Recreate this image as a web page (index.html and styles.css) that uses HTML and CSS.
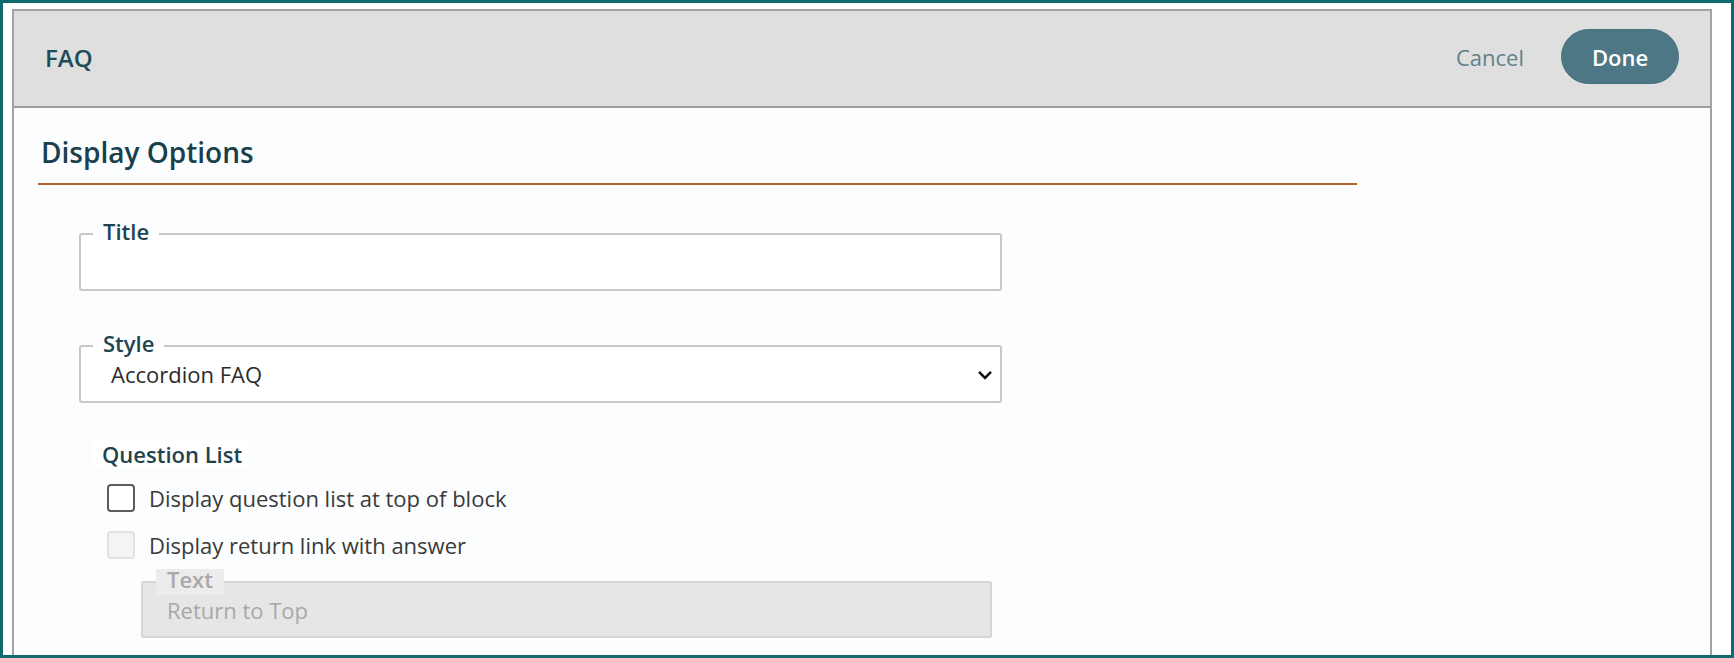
FILE: index.html
```html
<!DOCTYPE html>
<html lang="en">
<head>
<meta charset="utf-8">
<title>FAQ - Display Options</title>
<link rel="stylesheet" href="styles.css">
</head>
<body>
<div class="frame">
  <div class="panel">
    <header class="panel-header">
      <h1 class="panel-title">FAQ</h1>
      <div class="actions">
        <button class="btn-cancel" type="button">Cancel</button>
        <button class="btn-done" type="button">Done</button>
      </div>
    </header>
    <div class="panel-body">
      <section class="options">
        <h2 class="section-title">Display Options</h2>
        <div class="form">
          <fieldset class="field field-title">
            <legend class="field-legend">Title</legend>
            <input class="field-input" type="text" aria-label="Title">
          </fieldset>
          <fieldset class="field field-style">
            <legend class="field-legend">Style</legend>
            <div class="select">
              <span class="select-value">Accordion FAQ</span>
              <svg class="chevron" width="16" height="10" viewBox="0 0 16 10" aria-hidden="true">
                <polyline points="2,1.8 8,7.8 14,1.8" fill="none" stroke="#111" stroke-width="2.6" stroke-linecap="butt" stroke-linejoin="miter"/>
              </svg>
            </div>
          </fieldset>
          <fieldset class="group">
            <legend class="group-legend">Question List</legend>
            <label class="check-row">
              <span class="check-box"></span>
              <span class="check-label">Display question list at top of block</span>
            </label>
            <label class="check-row check-row-2">
              <span class="check-box check-box-disabled"></span>
              <span class="check-label">Display return link with answer</span>
            </label>
            <fieldset class="field field-disabled">
              <legend class="field-legend legend-disabled">Text</legend>
              <div class="field-input input-disabled">Return to Top</div>
            </fieldset>
          </fieldset>
        </div>
      </section>
    </div>
  </div>
</div>
</body>
</html>
```

FILE: styles.css
```css
* {
  box-sizing: border-box;
}

html, body {
  margin: 0;
  padding: 0;
  background: #ffffff;
}

body {
  font-family: "Open Sans", "Noto Sans", "Liberation Sans", sans-serif;
  color: #333333;
}

.frame {
  width: 1734px;
  height: 658px;
  border: 3px solid #0e6a6e;
  padding: 6px 19px 0 9px;
  background: #ffffff;
  overflow: hidden;
}

.panel {
  height: 100%;
  border: 2px solid #a2a2a2;
  border-bottom: none;
  background: #fcfdfe;
}

.panel-header {
  height: 97px;
  background: #dfdfdf;
  border-bottom: 2px solid #9c9c9c;
  display: flex;
  align-items: center;
  justify-content: space-between;
  padding: 0 31px 4px 31px;
}

.panel-title {
  margin: 0;
  font-size: 24px;
  font-weight: 600;
  color: #1e4c5a;
  line-height: 32px;
  padding-top: 2px;
}

.actions {
  display: flex;
  align-items: center;
  gap: 37px;
}

.btn-cancel {
  border: none;
  background: transparent;
  padding: 0;
  font-family: inherit;
  font-size: 22px;
  font-weight: 400;
  color: #62808a;
  line-height: 30px;
}

.btn-done {
  width: 118px;
  height: 55px;
  border: 1px solid #46707e;
  border-radius: 28px;
  background: #4e7785;
  color: #ffffff;
  font-family: inherit;
  font-size: 22px;
  font-weight: 600;
  padding: 0;
  line-height: 30px;
}

.panel-body {
  padding: 0 0 0 24px;
}

.options {
  width: 1319px;
}

.section-title {
  margin: 24px 0 0 0;
  font-size: 28px;
  font-weight: 600;
  line-height: 40px;
  color: #19414d;
  padding: 0 0 11px 3px;
  border-bottom: 2px solid #b4622a;
}

.form {
  margin-left: 41px;
  width: 923px;
  padding-top: 36px;
}

.field {
  margin: 0;
  padding: 0 0 12px 0;
  border: 2px solid #c8c8c8;
  border-radius: 3px;
  background: #ffffff;
  min-width: 0;
}

.field-legend {
  margin-left: 12px;
  padding: 0 10px 6px 10px;
  font-size: 22px;
  font-weight: 600;
  line-height: 20px;
  color: #1f4450;
}

.field-input {
  display: block;
  width: 100%;
  height: 30px;
  border: none;
  background: transparent;
  font-family: inherit;
  font-size: 22px;
  line-height: 30px;
  padding: 0 0 0 30px;
  color: #333333;
  outline: none;
}

.field-style {
  margin-top: 42px;
}

.select {
  display: flex;
  align-items: center;
  justify-content: space-between;
  height: 30px;
  padding: 0 7px 0 30px;
  font-size: 22px;
  line-height: 30px;
  color: #2b2b2b;
}

.chevron {
  display: block;
  margin-top: 1px;
}

.group {
  margin: 36px 0 0 0;
  padding: 0;
  border: none;
  min-width: 0;
}

.group-legend {
  margin-left: 13px;
  padding: 0 8px 0 10px;
  font-size: 22px;
  font-weight: 600;
  line-height: 30px;
  color: #1f4450;
  background: #ffffff;
}

.check-row {
  display: flex;
  align-items: center;
  gap: 14px;
  height: 30px;
  margin: 14px 0 0 28px;
}

.check-row-2 {
  margin-top: 17px;
}

.check-box {
  width: 28px;
  height: 28px;
  border: 2px solid #5c5c5c;
  border-radius: 4px;
  background: #ffffff;
  flex: none;
}

.check-box-disabled {
  border-color: #e2e2e2;
  background: #f4f4f4;
}

.check-label {
  font-size: 22px;
  line-height: 30px;
  color: #3a3a3a;
}

.field-disabled {
  margin: 9px 0 0 62px;
  width: 851px;
  padding-bottom: 11px;
  background: #e6e6e6;
  border-color: #d6d6d6;
}

.legend-disabled {
  margin-left: 13px;
  padding: 0 11px 6px 11px;
  color: #a9a9a9;
  font-weight: 600;
  background: #ececec;
}

.input-disabled {
  padding-left: 24px;
  color: #a8a8a8;
}
```
